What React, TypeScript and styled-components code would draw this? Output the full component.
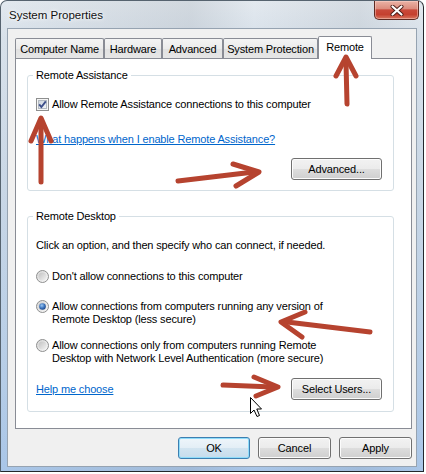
import React from "react";
import styled, { createGlobalStyle } from "styled-components";

const Global = createGlobalStyle`
  html, body { margin: 0; padding: 0; background: #ffffff; }
  body {
    font-family: "Liberation Sans", Arial, sans-serif;
    font-size: 11px;
    letter-spacing: -0.15px;
    color: #000;
  }
  * { box-sizing: border-box; }
`;

const Stage = styled.div`
  position: relative;
  width: 426px;
  height: 474px;
  overflow: hidden;
`;

const Window = styled.div`
  width: 424px;
  height: 472px;
  border: 1px solid #56636f;
  border-right-color: #23282d;
  border-bottom-color: #23282d;
  border-radius: 7px 7px 0 0;
  background:
    linear-gradient(90deg, rgba(255,255,255,0) 0%, rgba(120,130,140,0.16) 45%, rgba(255,255,255,0) 60%, rgba(90,100,110,0.1) 85%, rgba(255,255,255,0) 100%),
    linear-gradient(180deg, #e3e9ef 0%, #d8e1ea 8%, #c9d7e6 40%, #b6cde7 80%, #a9c6e8 100%);
  display: flex;
  flex-direction: column;
  padding: 0 6px 4px 6px;
`;

const TitleBar = styled.div`
  height: 27px;
  display: flex;
  justify-content: space-between;
  align-items: flex-start;
  padding-left: 2px;
`;

const Title = styled.div`
  margin-top: 7px;
  font-size: 11.5px;
  line-height: 15px;
  letter-spacing: 0;
  color: #111;
  text-shadow: 0 0 6px #fff, 0 0 3px #fff;
`;

const CloseButton = styled.div`
  width: 45px;
  height: 19px;
  margin-right: -2px;
  border: 1px solid #5e2a22;
  border-top: none;
  border-radius: 0 0 5px 5px;
  background: linear-gradient(180deg, #eab3a6 0%, #dc8d7e 42%, #c9493a 50%, #c5402f 75%, #d8765f 100%);
  box-shadow: inset 0 0 0 1px rgba(255, 220, 210, 0.45);
  display: flex;
  align-items: center;
  justify-content: center;
`;

const Client = styled.div`
  flex: 1;
  background: #f0f0f0;
  border: 1px solid #96a3b1;
  display: flex;
  flex-direction: column;
  padding: 7px 4px 0 7px;
`;

const TabStrip = styled.div`
  display: flex;
  align-items: flex-end;
  height: 22px;
`;

const Tab = styled.div<{ $w: number; $active?: boolean }>`
  width: ${(p) => p.$w}px;
  height: ${(p) => (p.$active ? 23 : 20)}px;
  margin-bottom: ${(p) => (p.$active ? -1 : 0)}px;
  border: 1px solid #898c95;
  border-bottom: none;
  border-radius: 2px 2px 0 0;
  background: ${(p) =>
    p.$active
      ? "#ffffff"
      : "linear-gradient(180deg, #f4f4f4 0%, #ebebeb 50%, #e1e1e1 51%, #e6e6e6 100%)"};
  position: relative;
  z-index: ${(p) => (p.$active ? 2 : 0)};
  display: flex;
  align-items: center;
  justify-content: center;
  padding-bottom: ${(p) => (p.$active ? 2 : 0)}px;
  white-space: nowrap;
`;

const Panel = styled.div`
  position: relative;
  z-index: 1;
  height: 371px;
  width: 397px;
  background: #ffffff;
  border: 1px solid #898c95;
  padding: 16px 17px 0 11px;
  display: flex;
  flex-direction: column;
`;

const GroupBox = styled.div<{ $h: number; $gap?: number }>`
  position: relative;
  height: ${(p) => p.$h}px;
  margin-top: ${(p) => p.$gap ?? 0}px;
  border: 1px solid #d5dfe5;
  border-radius: 3px;
  padding: 21px 11px 0 8px;
  display: flex;
  flex-direction: column;
`;

const GroupTitle = styled.div`
  position: absolute;
  top: -8px;
  left: 5px;
  padding: 0 3px;
  line-height: 15px;
  background: #ffffff;
`;

const Line = styled.div<{ $gap?: number }>`
  line-height: 15px;
  margin-top: ${(p) => p.$gap ?? 0}px;
`;

const CheckRow = styled.label`
  display: flex;
  align-items: center;
  gap: 3px;
  line-height: 15px;
  height: 15px;
`;

const RadioRow = styled.div<{ $gap: number }>`
  display: flex;
  align-items: flex-start;
  gap: 3px;
  margin-top: ${(p) => p.$gap}px;
  line-height: 13px;
`;

const Link = styled.a`
  color: #0066cc;
  text-decoration: underline;
  line-height: 15px;
  cursor: pointer;
`;

const ButtonRow = styled.div<{ $gap: number; $between?: boolean }>`
  display: flex;
  align-items: center;
  justify-content: ${(p) => (p.$between ? "space-between" : "flex-end")};
  margin-top: ${(p) => p.$gap}px;
`;

const Button = styled.button<{ $w: number; $default?: boolean }>`
  width: ${(p) => p.$w}px;
  height: 22px;
  padding: 0;
  font: inherit;
  letter-spacing: inherit;
  color: #000;
  border: 1px solid ${(p) => (p.$default ? "#3c7fb1" : "#707070")};
  border-radius: 3px;
  background: ${(p) =>
    p.$default
      ? "linear-gradient(180deg, #eef5fa 0%, #e3eef6 50%, #d2e4f0 51%, #c6dcec 100%)"
      : "linear-gradient(180deg, #f2f2f2 0%, #ebebeb 50%, #dddddd 51%, #cfcfcf 100%)"};
  box-shadow: inset 0 0 0 1px ${(p) => (p.$default ? "#8fdcfa" : "#fcfcfc")};
`;

const Footer = styled.div`
  display: flex;
  justify-content: flex-end;
  gap: 8px;
  margin-top: 8px;
  width: 397px;
`;

const Overlay = styled.svg`
  position: absolute;
  left: 0;
  top: 0;
  z-index: 10;
  pointer-events: none;
`;

const CheckBoxIcon = () => (
  <svg width="13" height="13" viewBox="0 0 13 13">
    <defs>
      <linearGradient id="cbIn" x1="0" y1="0" x2="1" y2="1">
        <stop offset="0" stopColor="#cbd3dc" />
        <stop offset="1" stopColor="#f4f6f8" />
      </linearGradient>
    </defs>
    <rect x="0.5" y="0.5" width="12" height="12" fill="#f6f6f6" stroke="#8e8f8f" />
    <rect x="2.5" y="2.5" width="8" height="8" fill="url(#cbIn)" stroke="#b3bac2" />
    <path d="M3.2 6.3 L5.4 9 L9.8 3.4" stroke="#3d4f8a" strokeWidth="1.9" fill="none" />
  </svg>
);

const RadioIcon = ({ on }: { on?: boolean }) => (
  <svg width="13" height="13" viewBox="0 0 13 13" style={{ flexShrink: 0 }}>
    <defs>
      <linearGradient id="rbOut" x1="0" y1="0" x2="1" y2="1">
        <stop offset="0" stopColor="#d6d6d6" />
        <stop offset="1" stopColor="#fafafa" />
      </linearGradient>
      <linearGradient id="rbIn" x1="0" y1="0" x2="1" y2="1">
        <stop offset="0" stopColor="#c2c2c2" />
        <stop offset="1" stopColor="#f2f2f2" />
      </linearGradient>
      <radialGradient id="rbDot" cx="0.4" cy="0.35" r="0.7">
        <stop offset="0" stopColor="#9cc8f2" />
        <stop offset="0.55" stopColor="#3e76c0" />
        <stop offset="1" stopColor="#173f7d" />
      </radialGradient>
    </defs>
    <circle cx="6.5" cy="6.5" r="6" fill="url(#rbOut)" stroke="#8e8f8f" />
    <circle cx="6.5" cy="6.5" r="4" fill="url(#rbIn)" />
    {on && <circle cx="6.5" cy="6.5" r="3.3" fill="url(#rbDot)" />}
  </svg>
);

const tabs = [
  { label: "Computer Name", w: 89 },
  { label: "Hardware", w: 58 },
  { label: "Advanced", w: 61 },
  { label: "System Protection", w: 95 },
  { label: "Remote", w: 54, active: true },
];

export default function App() {
  return (
    <Stage>
      <Global />
      <Window>
        <TitleBar>
          <Title>System Properties</Title>
          <CloseButton>
            <svg width="14" height="11" viewBox="0 0 14 11">
              <path d="M2.5 1.5 L11.5 9.5 M11.5 1.5 L2.5 9.5" stroke="#4a1c16" strokeWidth="4" strokeLinecap="round" />
              <path d="M2.5 1.5 L11.5 9.5 M11.5 1.5 L2.5 9.5" stroke="#ffffff" strokeWidth="2.2" strokeLinecap="round" />
            </svg>
          </CloseButton>
        </TitleBar>
        <Client>
          <TabStrip>
            {tabs.map((t) => (
              <Tab key={t.label} $w={t.w} $active={t.active}>
                {t.label}
              </Tab>
            ))}
          </TabStrip>
          <Panel>
            <GroupBox $h={116}>
              <GroupTitle>Remote Assistance</GroupTitle>
              <CheckRow>
                <CheckBoxIcon />
                <span>Allow Remote Assistance connections to this computer</span>
              </CheckRow>
              <Line $gap={20}>
                <Link>What happens when I enable Remote Assistance?</Link>
              </Line>
              <ButtonRow $gap={11}>
                <Button $w={91}>Advanced...</Button>
              </ButtonRow>
            </GroupBox>
            <GroupBox $h={196} $gap={25}>
              <GroupTitle>Remote Desktop</GroupTitle>
              <Line>Click an option, and then specify who can connect, if needed.</Line>
              <RadioRow $gap={17}>
                <RadioIcon />
                <span>Don't allow connections to this computer</span>
              </RadioRow>
              <RadioRow $gap={17}>
                <RadioIcon on />
                <span>
                  Allow connections from computers running any version of
                  <br />
                  Remote Desktop (less secure)
                </span>
              </RadioRow>
              <RadioRow $gap={13}>
                <RadioIcon />
                <span>
                  Allow connections only from computers running Remote
                  <br />
                  Desktop with Network Level Authentication (more secure)
                </span>
              </RadioRow>
              <ButtonRow $gap={13} $between>
                <Link>Help me choose</Link>
                <Button $w={91}>Select Users...</Button>
              </ButtonRow>
            </GroupBox>
          </Panel>
          <Footer>
            <Button $w={72} $default>OK</Button>
            <Button $w={73}>Cancel</Button>
            <Button $w={73}>Apply</Button>
          </Footer>
        </Client>
      </Window>
      <Overlay width="426" height="474" viewBox="0 0 426 474">
        <g stroke="#b6432f" strokeWidth="5" strokeLinecap="round" strokeLinejoin="round" fill="none">
          <path d="M347 104 L346 62" />
          <path d="M336 76 L346 57 L356 76" />
          <path d="M41 182 L41 123" />
          <path d="M31 141 L41 118 L51 141" />
          <path d="M178 181 L254 172" />
          <path d="M233 164 L259 172 L236 186" />
          <path d="M370 332 L287 322" />
          <path d="M305 312 L281 322 L302 337" />
          <path d="M223 385 L273 387" />
          <path d="M254 377 L278 387 L256 396" />
        </g>
        <path
          d="M250.5 397.5 L250.5 413.5 L254 410 L257 416.5 L259.5 415.5 L256.8 409 L261.5 409 Z"
          fill="#ffffff"
          stroke="#000000"
          strokeWidth="1"
          strokeLinejoin="round"
        />
      </Overlay>
    </Stage>
  );
}
